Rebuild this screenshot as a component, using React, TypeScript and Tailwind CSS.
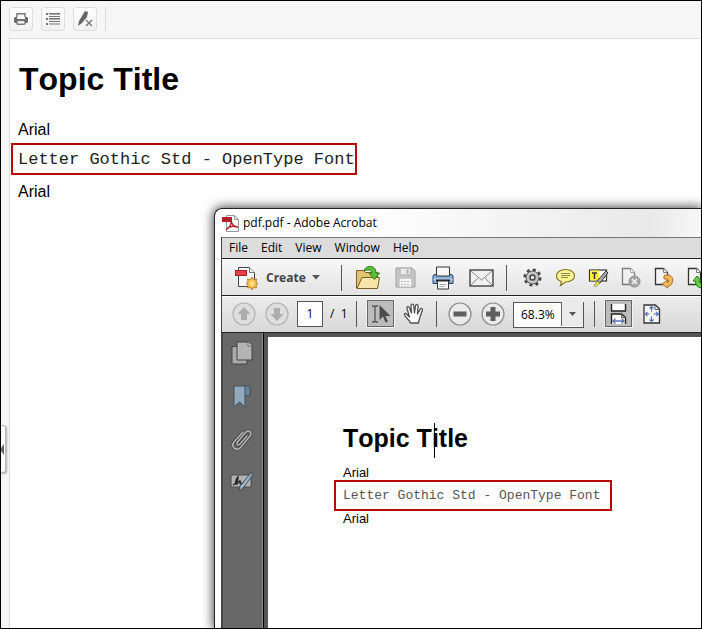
import type { ReactNode } from 'react';

type IconProps = { w: number; h: number; children: ReactNode };

function Icon({ w, h, children }: IconProps) {
  return (
    <svg width={w} height={h} viewBox={`0 0 ${w} ${h}`} fill="none" aria-hidden="true" className="block shrink-0">
      {children}
    </svg>
  );
}

function IconButton({ label, className = '', children }: { label: string; className?: string; children: ReactNode }) {
  return (
    <button type="button" aria-label={label} className={`flex shrink-0 items-center justify-center ${className}`}>
      {children}
    </button>
  );
}

function Separator({ className }: { className: string }) {
  return <span className={`h-[26px] w-px shrink-0 bg-[#555] ${className}`} />;
}

function TopicToolbar() {
  const box = 'h-6 w-6 rounded-[3px] border border-[#dedede] bg-linear-to-b from-white to-[#f1f1f1]';
  return (
    <div className="flex h-[35px] items-center gap-2 pl-2">
      <IconButton label="Print" className={box}>
        <Icon w={14} h={14}>
          <path d="M3 5V1.700h8V5" stroke="#777" strokeWidth="1.400" />
          <path d="M1 5h2v2h8V5h2l1 1v4l-1 1H1l-1-1V6z" fill="#6a6a6a" />
          <rect x="3" y="8.500" width="8" height="3.800" rx="1" fill="#fff" stroke="#777" strokeWidth="1.400" />
        </Icon>
      </IconButton>
      <IconButton label="Contents" className={box}>
        <Icon w={14} h={12}>
          <path d="M0 1h2M0 6h2M0 11h2" stroke="#777" strokeWidth="2" />
          <path d="M3 .5h11M3 3.500h11M3 5.500h11M3 8.500h11M3 11h11" stroke="#777" strokeWidth="1.200" />
          <path d="M3 1.500h11M3 6.500h11" stroke="#aaa" />
        </Icon>
      </IconButton>
      <IconButton label="Remove highlight" className={box}>
        <Icon w={16} h={17}>
          <path d="M8 1l3 1-1 5-5 6-4 3 1-5z" fill="#666" />
          <path d="M9 10l6 6M15 10l-6 6" stroke="#777" strokeWidth="1.400" />
        </Icon>
      </IconButton>
      <span className="h-6 w-px bg-[#dcdcdc]" />
    </div>
  );
}

function PageIcon({ children }: { children: ReactNode }) {
  return (
    <Icon w={20} h={22}>
      <path d="M1.500 1.500h8l4 4v12h-12z" fill="#f4f4f4" stroke="#333" strokeWidth="1.300" />
      <path d="M9.500 1.500v4h4" fill="#fff" stroke="#777" />
      {children}
    </Icon>
  );
}

function MainToolbar() {
  return (
    <div className="flex h-9 items-center overflow-hidden border-t border-white bg-linear-to-b from-[#f7f7f7] to-[#e3e3e3] pl-[13px]">
      <button type="button" className="flex shrink-0 items-center text-xs leading-4 font-bold text-[#444]">
        <Icon w={23} h={24}>
          <path d="M3.500 1.500h11l5 5v14h-16z" fill="#f7f7f7" stroke="#444" />
          <path d="M14.500 1.500v5h5" fill="#fff" stroke="#777" />
          <rect x="0.500" y="4.500" width="11" height="5" fill="#e3424b" stroke="#a71e28" />
          <path d="M17 11l1.500 2.500 3-.5-.5 3 2 1.500-2 1.500.5 3-3-.5L17 24l-1.500-2.500-3 .5.5-3-2-1.500 2-1.500-.5-3 3 .5z" fill="#f5c04b" stroke="#a8711c" strokeWidth=".8" />
          <circle cx="17" cy="17.500" r="2.500" fill="#fddc8a" />
        </Icon>
        <span className="ml-2 w-[40px] text-left">Create</span>
        <span className="ml-[6px]">
          <Icon w={8} h={5}><path d="M0 0h8L4 4.500z" fill="#555" /></Icon>
        </span>
      </button>
      <Separator className="ml-[21px]" />
      <IconButton label="Open" className="ml-[13px]">
        <Icon w={26} h={26}>
          <path d="M1.500 23V5.500h7l2 2h12V23z" fill="#e2c475" stroke="#7b5f25" />
          <path d="M2 23.500l5-11h17.500l-2 11z" fill="#f7e4a9" stroke="#7b5f25" />
          <path d="M9 6c1-6 12-7 12 2h3.500l-5 6.500L14 8h3c0-3-4-4-8-2z" fill="#5cc13a" stroke="#2d7a18" />
        </Icon>
      </IconButton>
      <IconButton label="Save" className="ml-[14px]">
        <Icon w={21} h={21}>
          <path d="M1 1h16l3 3v16H1z" fill="#c9c9c9" stroke="#a0a0a0" />
          <path d="M5 1h11v7H5z" fill="#e9e9e9" stroke="#aaa" />
          <path d="M11.500 2.500h2v4h-2z" fill="#aaa" />
          <path d="M4 11h13v9H4z" fill="#f3f3f3" stroke="#b5b5b5" />
          <path d="M6 14.500h9M6 17.500h9" stroke="#bbb" strokeDasharray="2 1" />
        </Icon>
      </IconButton>
      <IconButton label="Print" className="ml-4">
        <Icon w={22} h={24}>
          <path d="M1 10.500q0-2 2-2h16q2 0 2 2v7H1z" fill="#83addb" stroke="#29415c" />
          <path d="M4.500 1h13v9h-13z" fill="#f8f8f8" stroke="#333" />
          <path d="M1.500 12.500h19v2h-19z" fill="#b9d3ec" />
          <path d="M4 14.500h14" stroke="#222" strokeWidth="2" />
          <path d="M5.500 15h11v8h-11z" fill="#fff" stroke="#333" />
          <path d="M7.500 18.500h7M7.500 20.500h5" stroke="#aaa" />
        </Icon>
      </IconButton>
      <IconButton label="Email" className="ml-[15px]">
        <Icon w={25} h={18}>
          <rect x="1" y="1" width="23" height="16" fill="#f0f0f0" stroke="#444" strokeWidth="1.400" />
          <path d="M2 2l10.500 9L23 2M2 16l7.500-7.500M23 16l-7.500-7.500" stroke="#888" />
        </Icon>
      </IconButton>
      <Separator className="ml-3" />
      <IconButton label="Settings" className="ml-4">
        <Icon w={19} h={19}>
          <circle cx="9.500" cy="9.500" r="7.800" stroke="#444" strokeWidth="2.600" strokeDasharray="3.060 3.060" />
          <circle cx="9.500" cy="9.500" r="6.500" fill="#c4c4c4" stroke="#555" />
          <circle cx="9.500" cy="9.500" r="2.500" fill="#eee" stroke="#444" strokeWidth="1.400" />
        </Icon>
      </IconButton>
      <IconButton label="Comment" className="ml-[13px]">
        <Icon w={21} h={19}>
          <path d="M10.500 1.500c5 0 9 2.500 9 6.300S15.500 14 10.500 14L5.500 17.500l1-4C3 12.500 1.500 10.500 1.500 7.800c0-3.800 4-6.300 9-6.300z" fill="#fcf695" stroke="#87762a" strokeWidth="1.200" />
          <path d="M6 5.500h9M6 7.500h9M6 9.500h7" stroke="#8f884b" />
        </Icon>
      </IconButton>
      <IconButton label="Highlight text" className="ml-3">
        <Icon w={21} h={20}>
          <rect x="1.500" y="2" width="17" height="11" fill="#fff" stroke="#333" strokeWidth="1.200" />
          <rect x="2" y="2.500" width="9" height="10" fill="#fdf03a" />
          <path d="M4 5h5M6.500 5v6" stroke="#333" strokeWidth="1.500" />
          <path d="M18 3l2 2-8 10-3-2z" fill="#aaa" stroke="#333" />
          <path d="M9 13l3 2-4 3.500-2-.5z" fill="#f5e337" stroke="#777" strokeWidth=".7" />
        </Icon>
      </IconButton>
      <IconButton label="Delete page" className="ml-3 opacity-60">
        <PageIcon>
          <circle cx="13.500" cy="14.500" r="5.500" fill="#777" stroke="#555" />
          <path d="M11 12l5 5M16 12l-5 5" stroke="#fff" strokeWidth="1.500" />
        </PageIcon>
      </IconButton>
      <IconButton label="Rotate page" className="ml-[13px]">
        <PageIcon>
          <path d="M10 8.500c6-2 10 2 8.500 6.500-1 3-3 4.500-5 4.500V21L8 17l5.500-4v2.500c2.500-.5 2-4-3.500-3.500z" fill="#f6b95a" stroke="#a5671c" strokeWidth=".9" />
        </PageIcon>
      </IconButton>
      <IconButton label="Extract page" className="ml-[13px]">
        <PageIcon>
          <path d="M6 14l4-5 4 5h-2.500c.5 2 4 3 8 1v5c-7 2-11 0-11-6z" fill="#70cc48" stroke="#2d7a18" />
        </PageIcon>
      </IconButton>
    </div>
  );
}

function RoundIcon({ d, muted = false }: { d: string; muted?: boolean }) {
  return (
    <Icon w={24} h={24}>
      <circle cx="12" cy="12" r="11" fill={muted ? '#dedede' : '#eaeaea'} stroke={muted ? '#b4b4b4' : '#8c8c8c'} strokeWidth="1.200" />
      <path d={d} fill={muted ? '#adadad' : '#5f5f5f'} />
    </Icon>
  );
}

function NavigationToolbar() {
  const pressed = 'h-[27px] w-[27px] border border-[#666] bg-[#bcbcbc] outline-1 outline-[#f3f3f3]';
  return (
    <div className="flex h-9 items-center overflow-hidden border-t border-white bg-linear-to-b from-[#ececec] to-[#d8d8d8] pb-0.5 pl-[10px]">
      <IconButton label="Previous page">
        <RoundIcon muted d="M12 5l6.500 7H15v6H9v-6H5.500z" />
      </IconButton>
      <IconButton label="Next page" className="ml-[9px]">
        <RoundIcon muted d="M12 19l6.500-7H15V6H9v6H5.500z" />
      </IconButton>
      <input
        aria-label="Page number"
        defaultValue="1"
        className="ml-2 h-[26px] w-[26px] shrink-0 border border-[#555] bg-white text-center text-xs text-black"
      />
      <span className="ml-[7px] w-[18px] shrink-0 text-xs whitespace-pre text-black">/  1</span>
      <Separator className="ml-2" />
      <IconButton label="Select tool" className={`ml-[10px] ${pressed}`}>
        <Icon w={20} h={20}>
          <path d="M1 2h2l1 1 1-1h2M1 18h2l1-1 1 1h2M4 3v14" stroke="#555" strokeWidth="1.300" />
          <path d="M8.500 1v15l3.500-3.500 2.500 6 2.500-1-2.500-5.500h5z" fill="#4c4c4c" />
        </Icon>
      </IconButton>
      <IconButton label="Hand tool" className="ml-[9px]">
        <Icon w={22} h={22}>
          <path d="M7.500 20c-1-3-4.500-5-6-8-.5-2 1.500-2 2.500-.5L6.500 14 4 5.500C3.500 3 6 3 6.500 5L8.500 10 8 3c0-2.500 2.500-2.500 2.800 0l.7 7L12.500 3c.3-2.500 2.800-2 2.500.5L14.500 11 17 6.500c1-2 3-1 2.300 1L17 14c-.5 3-1.500 4-1.500 6z" fill="#fff" stroke="#505050" strokeWidth="1.300" strokeLinejoin="round" />
        </Icon>
      </IconButton>
      <Separator className="ml-[11px]" />
      <IconButton label="Zoom out" className="ml-[11px]">
        <RoundIcon d="M5.500 9.500h13v5h-13z" />
      </IconButton>
      <IconButton label="Zoom in" className="ml-[9px]">
        <RoundIcon d="M9.500 5h5v4.500H19v5h-4.500V19h-5v-4.500H5v-5h4.500z" />
      </IconButton>
      <div className="relative ml-2 h-[26px] w-[71px] shrink-0">
        <select
          aria-label="Zoom level"
          defaultValue="68.3%"
          className="h-full w-full appearance-none border border-[#555] bg-white pl-[7px] text-xs text-black"
        >
          <option>68.3%</option>
        </select>
        <span className="pointer-events-none absolute inset-y-px right-px flex w-[22px] items-center justify-center border-l border-[#666] bg-[#ebebeb]">
          <Icon w={7} h={4}><path d="M0 0h7L3.500 4z" fill="#555" /></Icon>
        </span>
      </div>
      <Separator className="ml-[10px]" />
      <IconButton label="Fit width" className={`ml-[10px] ${pressed}`}>
        <Icon w={17} h={20}>
          <path d="M1.500 0v7h14V0" fill="#fff" stroke="#222" strokeWidth="1.400" />
          <path d="M1.500 20V10h10l4 3.500V20" fill="#fff" stroke="#222" strokeWidth="1.400" />
          <path d="M11.500 10v3.500h4" stroke="#666" />
          <path d="M3 17h11M5.500 14.500L3 17l2.500 2.500M11.500 14.500L14 17l-2.500 2.500" stroke="#5b72b8" strokeWidth="1.300" />
        </Icon>
      </IconButton>
      <IconButton label="Fit page" className="ml-[11px]">
        <Icon w={18} h={20}>
          <path d="M1 1h11.500l4 4v14H1z" fill="#f5f7fb" stroke="#333" strokeWidth="1.300" />
          <path d="M12 1v4.500h4.500" stroke="#666" />
          <path d="M8.500 2.500v5M8.500 12.500v5M2.500 10h4M10.500 10h5M6.500 4.500l2-2 2 2M6.500 15.500l2 2 2-2M4.500 8l-2 2 2 2M13 8l2.500 2-2.500 2" stroke="#5b72b8" strokeWidth="1.200" />
        </Icon>
      </IconButton>
    </div>
  );
}

function NavigationPane() {
  return (
    <nav className="flex w-[41px] shrink-0 flex-col items-center border-r border-l border-r-[#8c8c8c] border-l-[#484848] bg-[#686868] pt-2 pr-0.5">
      <IconButton label="Page thumbnails">
        <Icon w={22} h={24}>
          <path d="M1 5.500h15V23H1z" fill="#a9a9a9" stroke="#444" />
          <path d="M6 1h11l4 4v14H6z" fill="#b4b4b4" stroke="#444" />
          <path d="M17 1v4h4" fill="#ddd" stroke="#666" />
        </Icon>
      </IconButton>
      <IconButton label="Bookmarks" className="mt-5">
        <Icon w={18} h={23}>
          <path d="M11 1h6v10h-6z" fill="#668599" stroke="#41515d" />
          <path d="M1 1h11v21l-5.500-5L1 22z" fill="#93aabc" stroke="#41515d" />
        </Icon>
      </IconButton>
      <IconButton label="Attachments" className="mt-5">
        <Icon w={22} h={24}>
          <path d="M16 8l-7 8c-2 2-4 0-2.500-2L14 5c3-4 8-1 5 3L10 19c-4 5-11 0-7-5l9-10" stroke="#3d3d3d" strokeWidth="3" strokeLinecap="round" />
          <path d="M16 8l-7 8c-2 2-4 0-2.500-2L14 5c3-4 8-1 5 3L10 19c-4 5-11 0-7-5l9-10" stroke="#b5b5b5" strokeWidth="1.600" strokeLinecap="round" />
        </Icon>
      </IconButton>
      <IconButton label="Signatures" className="mt-5">
        <Icon w={24} h={20}>
          <path d="M1 3h20v12H1z" fill="#b2b2b2" stroke="#4c4c4c" />
          <path d="M3 13c3-1 5-5 5-8-2 2-3 6-2 7s2-3 4-3c1 0-1 3 1 3l3-2" stroke="#222" strokeWidth="1.400" />
          <path d="M21 1l2 1-9 13-5 4 1-5z" fill="#9cb4c6" stroke="#44535f" />
        </Icon>
      </IconButton>
    </nav>
  );
}

function AcrobatWindow() {
  return (
    <section
      aria-label="pdf.pdf - Adobe Acrobat"
      className="absolute top-[207px] right-0 bottom-0 left-[213px] flex flex-col rounded-tl-lg border-t border-l border-[#222] bg-linear-to-r from-white from-30% via-[#e9e9e9] via-90% to-[#f8f8f8] font-['Open_Sans','Noto_Sans',sans-serif] shadow-[0_0_11px_1px_rgba(0,0,0,0.75)]"
    >
      <header className="flex h-[28px] shrink-0 items-center gap-1 pl-[7px]">
        <Icon w={17} h={17}>
          <path d="M4.500.5h8l4 4v12h-12z" fill="#fafafa" stroke="#999" />
          <path d="M12.500.500v4h4" stroke="#999" />
          <path d="M0 2h10v5H0z" fill="#b3202b" />
          <path d="M9 4c1 4-1 8-5 11M9 5c0 4 3 7 7 7M5.500 13c3-2 6-2.500 10-1" stroke="#b3202b" strokeWidth="1.400" />
        </Icon>
        <h2 className="text-xs text-black">pdf.pdf - Adobe Acrobat</h2>
      </header>
      <div className="ml-[6px] flex min-h-0 grow flex-col border-l border-[#444]">
        <div className="flex h-[21px] shrink-0 items-center gap-[13px] border-t border-[#777] bg-[#dcdcdc] pl-[7px] text-xs text-black">
          <button type="button">File</button>
          <button type="button">Edit</button>
          <button type="button">View</button>
          <button type="button">Window</button>
          <button type="button">Help</button>
        </div>
        <div className="shrink-0 border-y border-[#222]">
          <MainToolbar />
        </div>
        <div className="shrink-0 border-b border-[#222]">
          <NavigationToolbar />
        </div>
        <div className="flex min-h-0 grow">
          <NavigationPane />
          <div className="min-w-0 grow border-l border-black bg-[#555] pt-1 pl-1">
            <article className="h-full bg-white pt-[85px] pl-[66px] font-['Liberation_Sans',Arial,sans-serif] text-black">
              <div className="ml-[9px]">
                <h1 className="relative w-fit text-[25px] leading-8 font-bold [font-kerning:none]">
                  Topic Title
                  <span className="absolute top-px left-[91px] h-[35px] w-px bg-black" />
                </h1>
                <p className="mt-[11px] text-[13px] leading-[15px]">Arial</p>
              </div>
              <p className="h-[31px] w-[278px] border-2 border-[#b80808] pl-[7px] font-['Liberation_Mono',monospace] text-[13px] leading-[27px] whitespace-nowrap text-[#555]">
                Letter Gothic Std - OpenType Font
              </p>
              <p className="ml-[9px] text-[13px] leading-[15px]">Arial</p>
            </article>
          </div>
        </div>
      </div>
    </section>
  );
}

export default function App() {
  return (
    <div className="relative flex h-screen flex-col overflow-hidden border border-black bg-[#f6f6f6] font-['Liberation_Sans',Arial,sans-serif] text-black">
      <TopicToolbar />
      <main className="mt-0.5 ml-2 grow border-t border-l border-[#dcdcdc] bg-white pt-5">
        <h1 className="ml-[9px] text-[32px] leading-10 font-bold [font-kerning:none]">Topic Title</h1>
        <p className="mt-[19px] ml-2 leading-6">Arial</p>
        <p className="mt-px ml-px h-8 w-[346px] border-2 border-[#b80808] pt-px pl-[5px] font-['Liberation_Mono',monospace] text-[17px] leading-7 whitespace-nowrap text-[#222]">
          Letter Gothic Std - OpenType Font
        </p>
        <p className="mt-[5px] ml-2 leading-6">Arial</p>
      </main>
      <button
        type="button"
        aria-label="Show navigation"
        className="absolute top-[424px] left-0 flex h-12 w-[5px] items-center rounded-r-[3px] border border-l-0 border-[#bbb] bg-[#fafafa] shadow-[1px_1px_2px_rgba(0,0,0,0.3)]"
      >
        <Icon w={3} h={11}><path d="M3 0v11L0 7V4z" fill="#666" /></Icon>
      </button>
      <AcrobatWindow />
    </div>
  );
}
